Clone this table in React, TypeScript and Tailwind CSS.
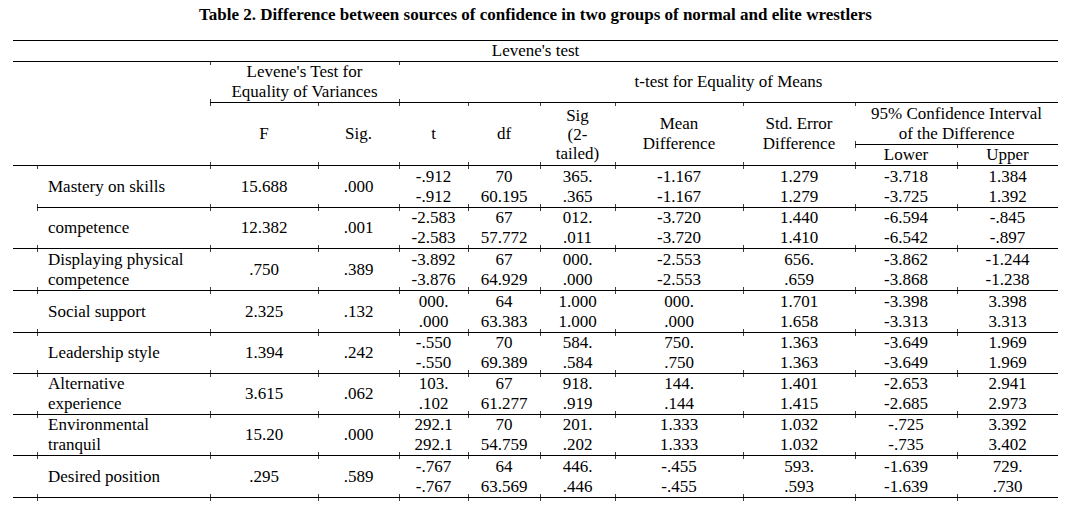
type Row = {
  label: string[];
  f: string;
  sig: string;
  t: string[];
  df: string[];
  sig2: string[];
  md: string[];
  se: string[];
  lo: string[];
  up: string[];
  h: string;
};

const rows: Row[] = [
  { label: ['Mastery on skills'], f: '15.688', sig: '.000', t: ['-.912', '-.912'], df: ['70', '60.195'], sig2: ['365.', '.365'], md: ['-1.167', '-1.167'], se: ['1.279', '1.279'], lo: ['-3.718', '-3.725'], up: ['1.384', '1.392'], h: 'h-[42px]' },
  { label: ['competence'], f: '12.382', sig: '.001', t: ['-2.583', '-2.583'], df: ['67', '57.772'], sig2: ['012.', '.011'], md: ['-3.720', '-3.720'], se: ['1.440', '1.410'], lo: ['-6.594', '-6.542'], up: ['-.845', '-.897'], h: 'h-[40px]' },
  { label: ['Displaying physical', 'competence'], f: '.750', sig: '.389', t: ['-3.892', '-3.876'], df: ['67', '64.929'], sig2: ['000.', '.000'], md: ['-2.553', '-2.553'], se: ['656.', '.659'], lo: ['-3.862', '-3.868'], up: ['-1.244', '-1.238'], h: 'h-[42px]' },
  { label: ['Social support'], f: '2.325', sig: '.132', t: ['000.', '.000'], df: ['64', '63.383'], sig2: ['1.000', '1.000'], md: ['000.', '.000'], se: ['1.701', '1.658'], lo: ['-3.398', '-3.313'], up: ['3.398', '3.313'], h: 'h-[42px]' },
  { label: ['Leadership style'], f: '1.394', sig: '.242', t: ['-.550', '-.550'], df: ['70', '69.389'], sig2: ['584.', '.584'], md: ['750.', '.750'], se: ['1.363', '1.363'], lo: ['-3.649', '-3.649'], up: ['1.969', '1.969'], h: 'h-[41px]' },
  { label: ['Alternative', 'experience'], f: '3.615', sig: '.062', t: ['103.', '.102'], df: ['67', '61.277'], sig2: ['918.', '.919'], md: ['144.', '.144'], se: ['1.401', '1.415'], lo: ['-2.653', '-2.685'], up: ['2.941', '2.973'], h: 'h-[40px]' },
  { label: ['Environmental', 'tranquil'], f: '15.20', sig: '.000', t: ['292.1', '292.1'], df: ['70', '54.759'], sig2: ['201.', '.202'], md: ['1.333', '1.333'], se: ['1.032', '1.032'], lo: ['-.725', '-.735'], up: ['3.392', '3.402'], h: 'h-[41px]' },
  { label: ['Desired position'], f: '.295', sig: '.589', t: ['-.767', '-.767'], df: ['64', '63.569'], sig2: ['446.', '.446'], md: ['-.455', '-.455'], se: ['593.', '.593'], lo: ['-1.639', '-1.639'], up: ['729.', '.730'], h: 'h-[42px]' },
];

// little corner marks Word leaves at cell edges
const tick =
  "relative before:absolute before:left-0 before:top-0 before:h-[3px] before:w-px before:bg-neutral-700 after:absolute after:left-0 after:bottom-0 after:h-[3px] after:w-px after:bg-neutral-700";

const cell = `${tick} p-0 text-center align-middle border-b border-black`;

function Lines({ items }: { items: string[] }) {
  return (
    <>
      {items.map((s, i) => (
        <div key={i}>{s}</div>
      ))}
    </>
  );
}

export default function App() {
  return (
    <div className="w-[1079px] h-[511px] bg-white text-black font-['Liberation_Serif',serif] text-[17px] leading-[20px]">
      <div className="ml-[13px] w-[1045px] pt-[5px]">
        <div className="h-[20px] text-center font-bold">
          Table 2. Difference between sources of confidence in two groups of normal and elite wrestlers
        </div>
        <table className="mt-[15px] w-[1045px] table-fixed border-collapse">
          <colgroup>
            <col className="w-[24px]" />
            <col className="w-[173px]" />
            <col className="w-[108px]" />
            <col className="w-[81px]" />
            <col className="w-[69px]" />
            <col className="w-[72px]" />
            <col className="w-[75px]" />
            <col className="w-[128px]" />
            <col className="w-[112px]" />
            <col className="w-[102px]" />
            <col className="w-[101px]" />
          </colgroup>
          <thead>
            <tr className="h-[21px]">
              <th colSpan={11} className="p-0 font-normal text-center align-middle border-t border-b border-black">
                Levene's test
              </th>
            </tr>
            <tr className="h-[41px]">
              <th colSpan={2} rowSpan={3} className="p-0 border-b border-black" />
              <th colSpan={2} className={`${cell} font-normal`}>
                <div>Levene's Test for</div>
                <div>Equality of Variances</div>
              </th>
              <th colSpan={7} className={`${cell} font-normal`}>
                t-test for Equality of Means
              </th>
            </tr>
            <tr className="h-[42px]">
              <th rowSpan={2} className={`${cell} font-normal`}>F</th>
              <th rowSpan={2} className={`${cell} font-normal`}>Sig.</th>
              <th rowSpan={2} className={`${cell} font-normal`}>t</th>
              <th rowSpan={2} className={`${cell} font-normal`}>df</th>
              <th rowSpan={2} className={`${cell} font-normal leading-[19px]`}>
                <div>Sig</div>
                <div>(2-</div>
                <div>tailed)</div>
              </th>
              <th rowSpan={2} className={`${cell} font-normal`}>
                <div>Mean</div>
                <div>Difference</div>
              </th>
              <th rowSpan={2} className={`${cell} font-normal`}>
                <div>Std. Error</div>
                <div>Difference</div>
              </th>
              <th colSpan={2} className={`${cell} font-normal`}>
                <div>95% Confidence Interval</div>
                <div>of the Difference</div>
              </th>
            </tr>
            <tr className="h-[21px]">
              <th className={`${cell} font-normal`}>Lower</th>
              <th className={`${cell} font-normal`}>Upper</th>
            </tr>
          </thead>
          <tbody>
            {rows.map((r, i) => (
              <tr key={i} className={r.h}>
                <td className={i === 0 ? 'p-0' : 'p-0 border-b border-black'} />
                <td className={`${cell} text-left pl-[11px]`}>
                  <Lines items={r.label} />
                </td>
                <td className={cell}>{r.f}</td>
                <td className={cell}>{r.sig}</td>
                <td className={cell}><Lines items={r.t} /></td>
                <td className={cell}><Lines items={r.df} /></td>
                <td className={cell}><Lines items={r.sig2} /></td>
                <td className={cell}><Lines items={r.md} /></td>
                <td className={cell}><Lines items={r.se} /></td>
                <td className={cell}><Lines items={r.lo} /></td>
                <td className={cell}><Lines items={r.up} /></td>
              </tr>
            ))}
            <tr className="h-[4px]">
              <td className="p-0" />
              {Array.from({ length: 10 }).map((_, i) => (
                <td key={i} className="relative p-0 before:absolute before:left-0 before:top-0 before:h-[3px] before:w-px before:bg-neutral-700" />
              ))}
            </tr>
          </tbody>
        </table>
      </div>
    </div>
  );
}
